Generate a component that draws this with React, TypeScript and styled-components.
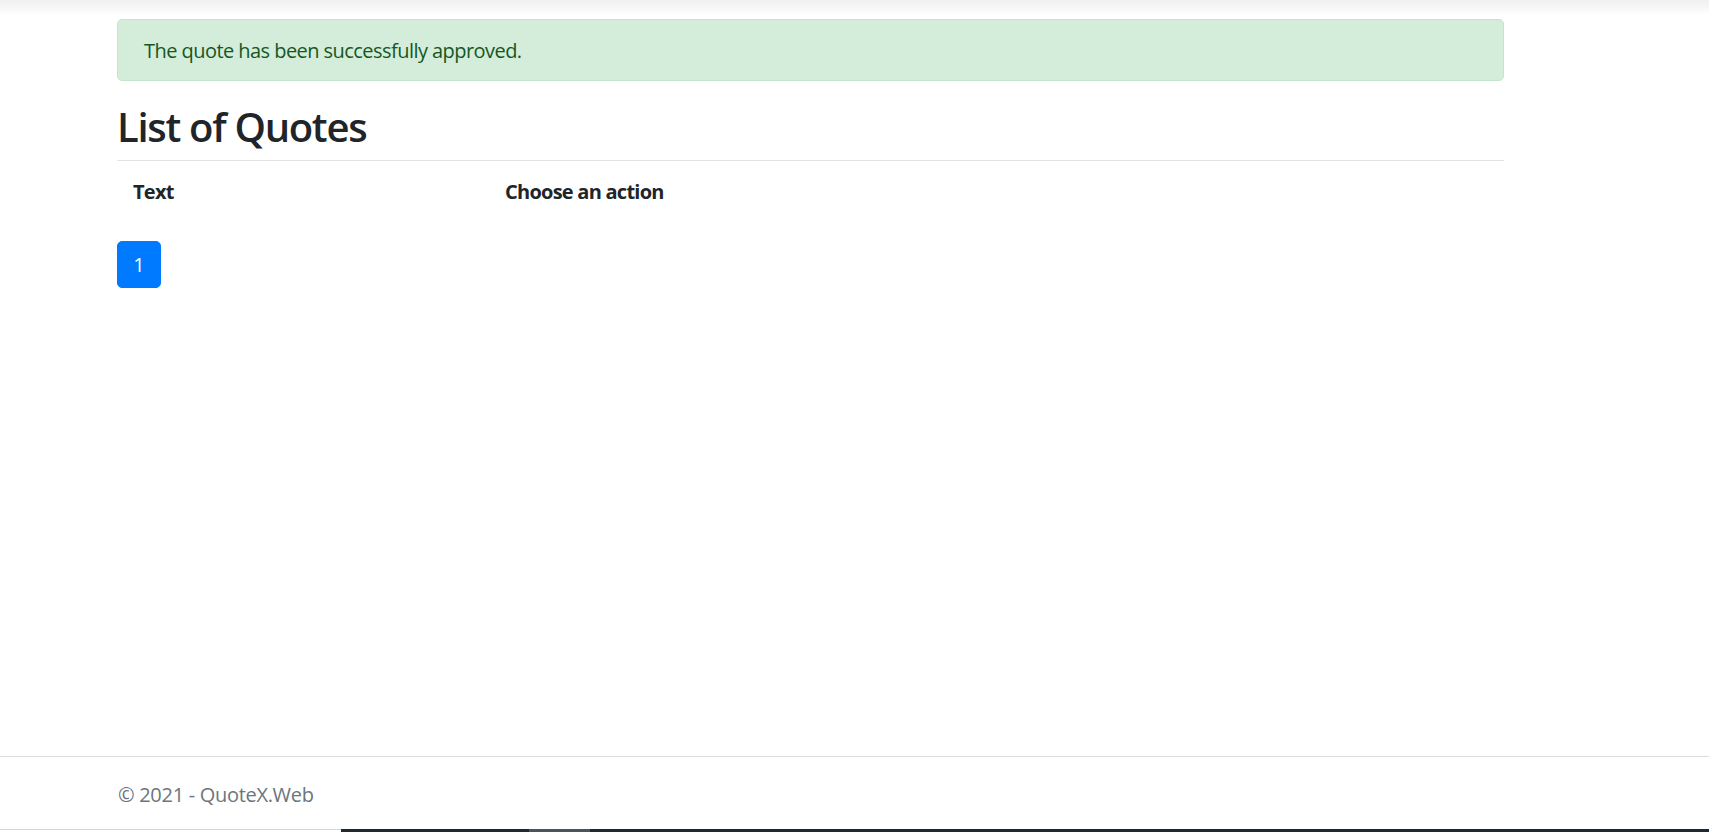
import React from "react";
import styled, { createGlobalStyle } from "styled-components";

const GlobalStyle = createGlobalStyle`
  html, body { margin: 0; padding: 0; background: #fff; }
  body {
    font-family: "Open Sans", "Noto Sans", "Liberation Sans", sans-serif;
    color: #212529;
    font-size: 20px;
    line-height: 1.5;
  }
  * { box-sizing: border-box; }
`;

const Page = styled.div`
  min-height: 100vh;
  display: flex;
  flex-direction: column;
`;

const TopShade = styled.div`
  height: 16px;
  flex: none;
  background: linear-gradient(to bottom, rgba(0, 0, 0, 0.06), rgba(0, 0, 0, 0));
`;

const Main = styled.main`
  flex: 1;
  padding-top: 3px;
`;

const Container = styled.div`
  width: 1387px;
  margin-left: 117px;
`;

const Alert = styled.div`
  background: #d4edda;
  border: 1px solid #c3e6cb;
  color: #155724;
  border-radius: 5px;
  padding: 16px 25px 14px 26px;
  line-height: 30px;
  letter-spacing: -0.55px;
  margin-bottom: 21px;
`;

const Title = styled.h2`
  margin: 0 0 10px 0;
  padding-top: 1px;
  height: 48px;
  font-size: 40px;
  font-weight: 600;
  line-height: 48px;
  letter-spacing: -1.3px;
  color: #212529;
`;

const Rule = styled.hr`
  margin: 0;
  border: 0;
  border-top: 1px solid #e2e2e2;
`;

const Table = styled.table`
  width: 100%;
  border-collapse: collapse;
  margin-bottom: 20px;
`;

const HeadCell = styled.th<{ $w?: number }>`
  text-align: left;
  font-weight: 700;
  padding: 16px 15px 14px 16px;
  line-height: 30px;
  letter-spacing: -0.75px;
  ${(p) => (p.$w ? `width: ${p.$w}px;` : "")}
`;

const Pagination = styled.ul`
  display: flex;
  list-style: none;
  margin: 0;
  padding: 0;
`;

const PageLink = styled.a<{ $active?: boolean }>`
  display: block;
  width: 44px;
  height: 47px;
  text-align: center;
  padding: 10px 0;
  line-height: 25px;
  font-size: 20px;
  border-radius: 5px;
  border: 1px solid #007bff;
  background: ${(p) => (p.$active ? "#007bff" : "#fff")};
  color: ${(p) => (p.$active ? "#fff" : "#007bff")};
  text-decoration: none;
`;

const Footer = styled.footer`
  flex: none;
  height: 73px;
  border-top: 1px solid #dedede;
  color: #6c757d;
  line-height: 72px;
  padding-top: 3px;
  white-space: nowrap;
`;

const FooterText = styled.div`
  margin-left: 118px;
  line-height: 69px;
  letter-spacing: -0.3px;
`;

const Taskbar = styled.div`
  flex: none;
  height: 3px;
  display: grid;
  grid-template-columns: 341px 188px 61px 1fr;
`;

const TaskSeg = styled.div<{ $tone: "light" | "dark" | "mid" }>`
  background: ${(p) =>
    p.$tone === "light" ? "#fff" : p.$tone === "mid" ? "#4b5559" : "#1f2a30"};
  border-top: ${(p) => (p.$tone === "light" ? "1px solid #d6d6d6" : "none")};
`;

export default function App() {
  return (
    <>
      <GlobalStyle />
      <Page>
        <TopShade />
        <Main>
          <Container>
            <Alert>The quote has been successfully approved.</Alert>
            <Title>List of Quotes</Title>
            <Rule />
            <Table>
              <thead>
                <tr>
                  <HeadCell $w={372}>Text</HeadCell>
                  <HeadCell>Choose an action</HeadCell>
                </tr>
              </thead>
              <tbody />
            </Table>
            <Pagination>
              <li>
                <PageLink $active href="#">
                  1
                </PageLink>
              </li>
            </Pagination>
          </Container>
        </Main>
        <Footer>
          <FooterText>© 2021 - QuoteX.Web</FooterText>
        </Footer>
        <Taskbar>
          <TaskSeg $tone="light" />
          <TaskSeg $tone="dark" />
          <TaskSeg $tone="mid" />
          <TaskSeg $tone="dark" />
        </Taskbar>
      </Page>
    </>
  );
}
